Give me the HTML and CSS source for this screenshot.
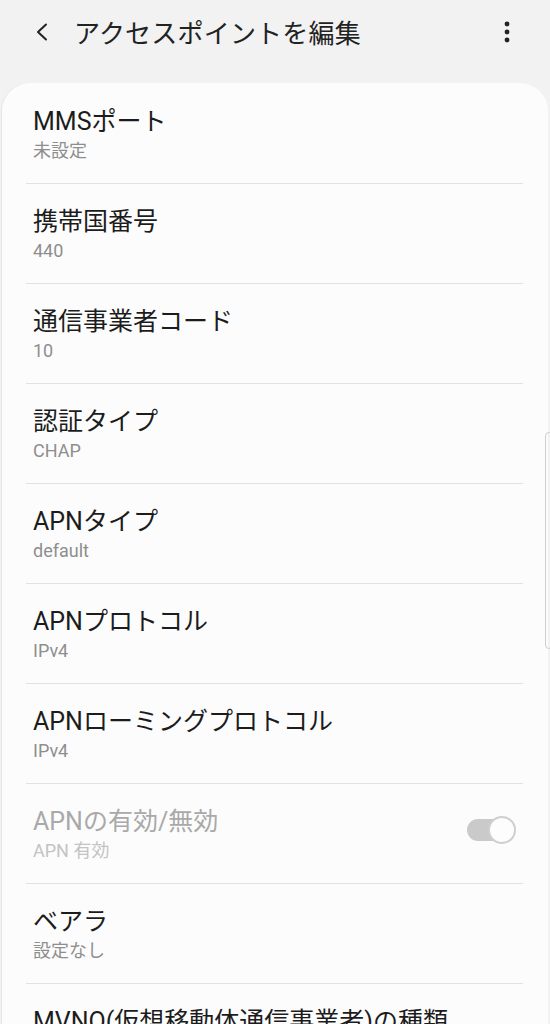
FILE: index.html
```html
<!DOCTYPE html>
<html lang="ja">
<head>
  <meta charset="UTF-8">
  <title>アクセスポイントを編集</title>
  <link rel="stylesheet" href="styles.css">
</head>
<body>
  <div class="toolbar">
    <svg class="back" width="16" height="18" viewBox="0 0 16 18">
      <path d="M12 1.5 L4 9 L12 16.5" fill="none" stroke="#222" stroke-width="2" stroke-linecap="round" stroke-linejoin="round"/>
    </svg>
    <div class="title">アクセスポイントを編集</div>
    <svg class="more" width="8" height="22" viewBox="0 0 8 22">
      <circle cx="4" cy="3" r="2.4" fill="#222"/>
      <circle cx="4" cy="11" r="2.4" fill="#222"/>
      <circle cx="4" cy="19" r="2.4" fill="#222"/>
    </svg>
  </div>

  <div class="card">
    <div class="item">
      <div class="label">MMSポート</div>
      <div class="value">未設定</div>
    </div>
    <div class="item">
      <div class="label">携帯国番号</div>
      <div class="value">440</div>
    </div>
    <div class="item">
      <div class="label">通信事業者コード</div>
      <div class="value">10</div>
    </div>
    <div class="item">
      <div class="label">認証タイプ</div>
      <div class="value">CHAP</div>
    </div>
    <div class="item">
      <div class="label">APNタイプ</div>
      <div class="value">default</div>
    </div>
    <div class="item">
      <div class="label">APNプロトコル</div>
      <div class="value">IPv4</div>
    </div>
    <div class="item">
      <div class="label">APNローミングプロトコル</div>
      <div class="value">IPv4</div>
    </div>
    <div class="item disabled">
      <div class="text">
        <div class="label">APNの有効/無効</div>
        <div class="value">APN 有効</div>
      </div>
      <div class="switch"><div class="thumb"></div></div>
    </div>
    <div class="item">
      <div class="label">ベアラ</div>
      <div class="value">設定なし</div>
    </div>
    <div class="item last">
      <div class="label">MVNO(仮想移動体通信事業者)の種類</div>
    </div>
  </div>

  <div class="scrollbar"></div>
</body>
</html>
```

FILE: styles.css
```css
html, body { margin: 0; padding: 0; }
body {
  background: #f2f2f2;
  font-family: Roboto, "Noto Sans CJK JP", sans-serif;
  width: 550px;
  height: 1024px;
  overflow: hidden;
  position: relative;
}

.toolbar {
  height: 63px;
  display: flex;
  align-items: center;
  padding: 0 0 0 34px;
}
.toolbar .back { margin-top: 1px; }
.toolbar .title {
  flex: 1;
  margin-left: 24px;
  font-size: 26px;
  color: #222;
  letter-spacing: 0.2px;
}
.toolbar .more { margin-right: 39px; }

.card {
  margin: 20px 2px 0;
  padding-top: 1px;
  background: #fcfcfc;
  border-radius: 28px 28px 0 0;
  box-shadow: -1px 0 0 #e6e6e6;
}

.item {
  margin: 0 25px 0 24px;
  padding: 21px 7px 0;
  height: 78px;
  border-bottom: 1px solid #e2e2e2;
  display: flex;
  flex-direction: column;
}
.item.disabled {
  flex-direction: row;
  align-items: flex-start;
}
.item.disabled .text { flex: 1; }

.label {
  font-size: 25px;
  line-height: 34px;
  color: #1c1c1c;
}
.value {
  font-size: 18px;
  line-height: 24px;
  margin-top: 0;
  color: #8e8e8e;
}
.disabled .label { color: #a9a9a9; }
.disabled .value { color: #c3c3c3; }

.switch {
  position: relative;
  width: 40px;
  height: 22px;
  margin: 14px 9px 0 0;
  background: #cacaca;
  border-radius: 11px;
}
.switch .thumb {
  position: absolute;
  top: -3px;
  right: -9px;
  width: 24px;
  height: 24px;
  background: #fdfdfd;
  border: 2px solid #cfcfcf;
  border-radius: 50%;
}

.scrollbar {
  position: absolute;
  right: -3px;
  top: 432px;
  width: 6px;
  height: 215px;
  border: 1px solid #cfcfcf;
  border-radius: 4px;
}
```
